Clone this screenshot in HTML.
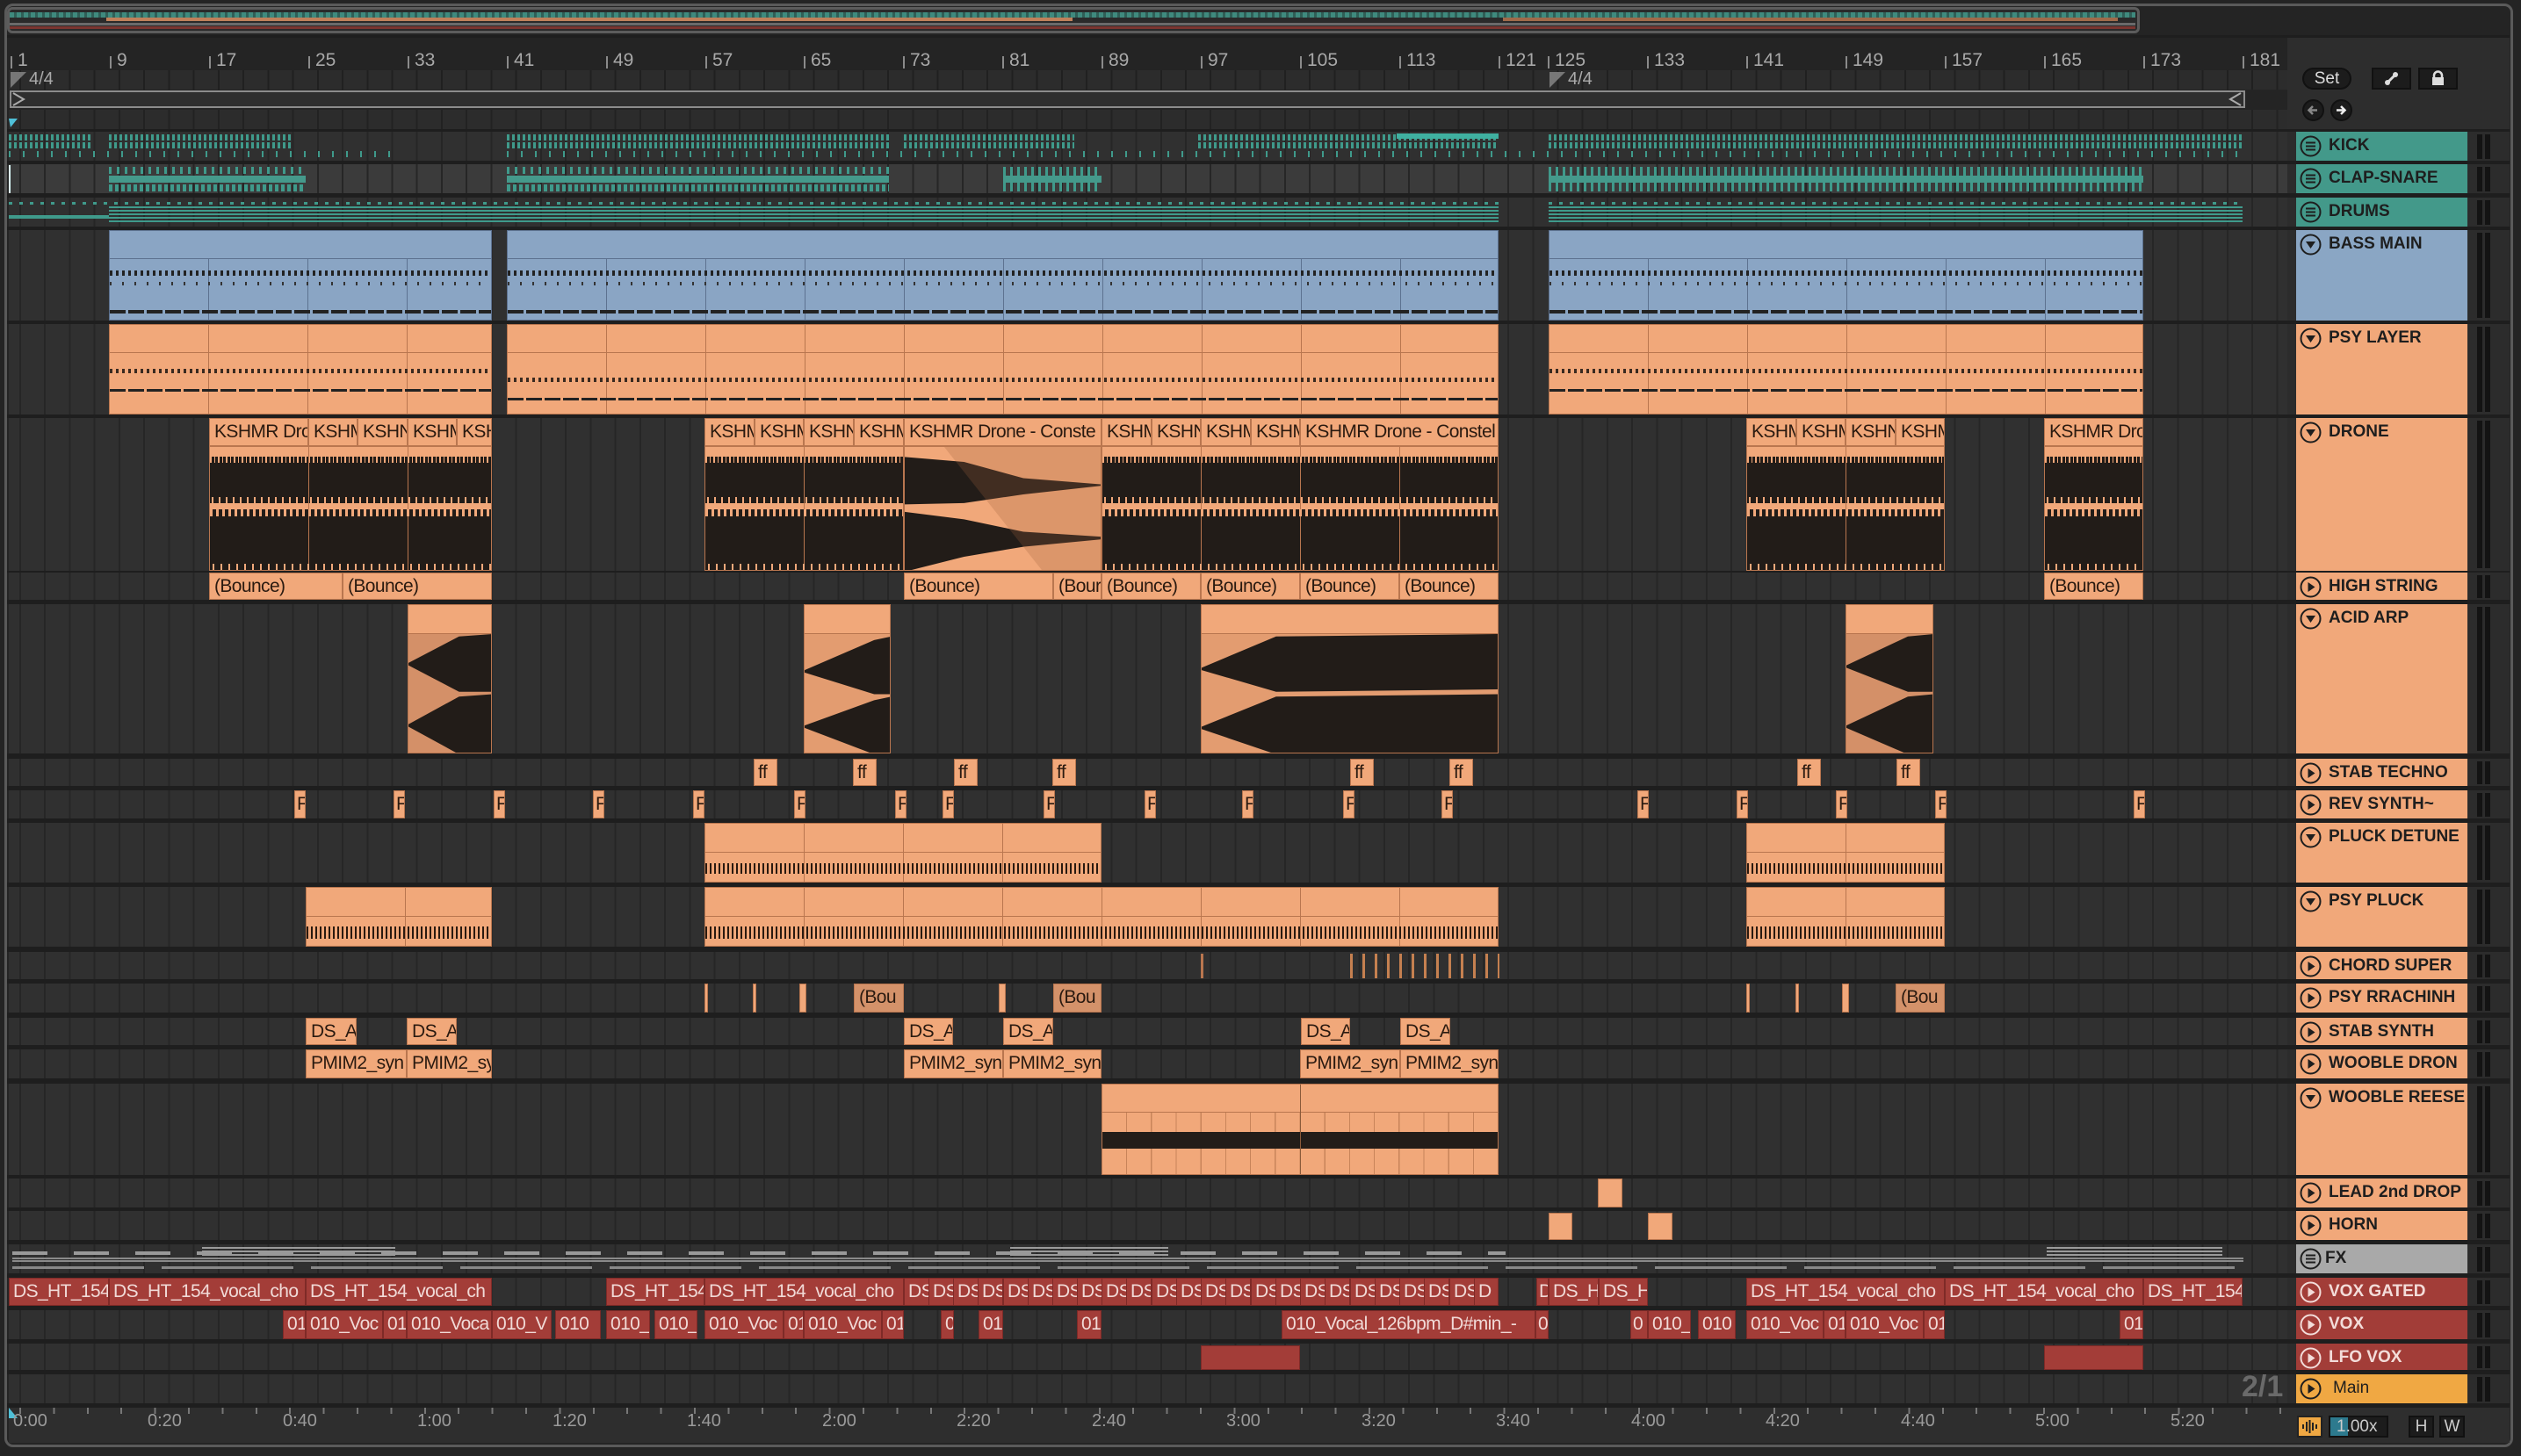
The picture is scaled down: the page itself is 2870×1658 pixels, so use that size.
<!DOCTYPE html>
<html><head><meta charset="utf-8"><style>
*{margin:0;padding:0;box-sizing:border-box}
body{width:2870px;height:1658px;background:#242424;position:relative;overflow:hidden;font-family:"Liberation Sans",sans-serif}
.a{position:absolute}
.frame{position:absolute;left:5px;top:4px;width:2856px;height:1644px;border:3px solid #5a5a5a;border-radius:10px}
.row{position:absolute;left:10px;width:2594px;background:#303030 repeating-linear-gradient(90deg,#262626 0 2px,transparent 2px 28.234px);background-position:12px 0}
.sep{position:absolute;left:8px;width:2849px;background:#1e1e1e}
.c{position:absolute;background:#f1a87a;border:1px solid #b9764f;overflow:hidden;color:#2a1a10;font-family:"Liberation Sans Narrow","Liberation Sans",sans-serif;font-size:21px;letter-spacing:-0.6px;white-space:nowrap;line-height:30px;padding-left:5px}
.r{position:absolute;background:#a33d38;border:1px solid #7e2a27;overflow:hidden;color:#f1dad7;font-family:"Liberation Sans Narrow","Liberation Sans",sans-serif;font-size:21px;letter-spacing:-0.6px;white-space:nowrap;line-height:30px;padding-left:4px}
.b{position:absolute;background:#8aa5c4;border:1px solid #5d7290}
.hd{position:absolute;left:2614px;width:195px;font-weight:bold;font-size:19px;color:#1e1e1e;padding:4px 0 0 37px;line-height:24px;white-space:nowrap}
.hd svg{position:absolute;left:4px;top:4px}
.m{position:absolute;left:2820px;width:16px;background:linear-gradient(90deg,#131313 0 6px,transparent 6px 9px,#131313 9px 15px,transparent 15px)}
.lbl{position:absolute;top:57px;color:#a8a8a8;font-size:21px}
.tk{position:absolute;top:64px;width:2px;height:14px;background:#8a8a8a}
.tl{position:absolute;top:1607px;color:#9a9a9a;font-size:20px}
.teal{background:repeating-linear-gradient(90deg,#3f9a8b 0 3px,transparent 3px 6px)}
.wv{background:
 repeating-linear-gradient(90deg,#f1a87a 0 2px,transparent 2px 5px,#f1a87a 5px 6px,transparent 6px 9px) 0 11px/100% 7px no-repeat,
 repeating-linear-gradient(90deg,transparent 0 2px,#f1a87a 2px 4px,transparent 4px 8px) 0 57px/100% 7px no-repeat,
 repeating-linear-gradient(90deg,#f1a87a 0 3px,transparent 3px 7px) 0 71px/100% 8px no-repeat,
 repeating-linear-gradient(90deg,transparent 0 3px,#f1a87a 3px 5px,transparent 5px 9px) 0 133px/100% 9px no-repeat,
 repeating-linear-gradient(90deg,transparent 0 112px,#b9764f 112px 113px),
 linear-gradient(#f1a87a 0 11px,#221c18 11px 64px,#f1a87a 64px 71px,#221c18 71px 142px)}
.btn{position:absolute;background:#1c1c1c;border:2px solid #111;color:#ccc;text-align:center}
</style></head><body>
<div class="frame"></div>

<!-- overview -->
<div class="a" style="left:8px;top:8px;width:2428px;height:30px;border:3px solid #5c5c5c;border-radius:6px;background:#2a2a2a;overflow:hidden">
 <div class="a" style="left:0;top:3px;width:2420px;height:6px;background:repeating-linear-gradient(90deg,#3f8a7e 0 5px,#2f5f57 5px 8px)"></div>
 <div class="a" style="left:110px;top:9px;width:1100px;height:4px;background:#c0805a"></div>
 <div class="a" style="left:1700px;top:9px;width:700px;height:4px;background:#a06a4a"></div>
 <div class="a" style="left:0;top:15px;width:2420px;height:3px;background:#6a6a6a"></div>
 <div class="a" style="left:0;top:19px;width:2420px;height:3px;background:#7a3530"></div>
</div>
<div class="a" style="left:8px;top:40px;width:2849px;height:3px;background:#1e1e1e"></div>

<!-- ruler -->
<div class="a" style="left:10px;top:80px;width:2594px;height:22px;background:#2c2c2c repeating-linear-gradient(90deg,#202020 0 2px,transparent 2px 28.234px);background-position:12px 0"></div>
<div class="tk" style="left:12px"></div><div class="lbl" style="left:20px">1</div>
<div class="tk" style="left:125px"></div><div class="lbl" style="left:133px">9</div>
<div class="tk" style="left:238px"></div><div class="lbl" style="left:246px">17</div>
<div class="tk" style="left:351px"></div><div class="lbl" style="left:359px">25</div>
<div class="tk" style="left:464px"></div><div class="lbl" style="left:472px">33</div>
<div class="tk" style="left:577px"></div><div class="lbl" style="left:585px">41</div>
<div class="tk" style="left:690px"></div><div class="lbl" style="left:698px">49</div>
<div class="tk" style="left:803px"></div><div class="lbl" style="left:811px">57</div>
<div class="tk" style="left:915px"></div><div class="lbl" style="left:923px">65</div>
<div class="tk" style="left:1028px"></div><div class="lbl" style="left:1036px">73</div>
<div class="tk" style="left:1141px"></div><div class="lbl" style="left:1149px">81</div>
<div class="tk" style="left:1254px"></div><div class="lbl" style="left:1262px">89</div>
<div class="tk" style="left:1367px"></div><div class="lbl" style="left:1375px">97</div>
<div class="tk" style="left:1480px"></div><div class="lbl" style="left:1488px">105</div>
<div class="tk" style="left:1593px"></div><div class="lbl" style="left:1601px">113</div>
<div class="tk" style="left:1706px"></div><div class="lbl" style="left:1714px">121</div>
<div class="tk" style="left:1762px"></div><div class="lbl" style="left:1770px">125</div>
<div class="tk" style="left:1875px"></div><div class="lbl" style="left:1883px">133</div>
<div class="tk" style="left:1988px"></div><div class="lbl" style="left:1996px">141</div>
<div class="tk" style="left:2101px"></div><div class="lbl" style="left:2109px">149</div>
<div class="tk" style="left:2214px"></div><div class="lbl" style="left:2222px">157</div>
<div class="tk" style="left:2327px"></div><div class="lbl" style="left:2335px">165</div>
<div class="tk" style="left:2440px"></div><div class="lbl" style="left:2448px">173</div>
<div class="tk" style="left:2553px"></div><div class="lbl" style="left:2561px">181</div>
<svg class="a" style="left:10px;top:80px" width="22" height="22"><polygon points="2,2 20,2 2,20" fill="#777"/></svg>
<div class="a" style="left:33px;top:79px;color:#aaa;font-size:20px">4/4</div>
<svg class="a" style="left:1762px;top:80px" width="22" height="22"><polygon points="2,2 20,2 2,20" fill="#777"/></svg>
<div class="a" style="left:1785px;top:79px;color:#aaa;font-size:20px">4/4</div>
<!-- loop bar -->
<div class="a" style="left:11px;top:103px;width:2545px;height:20px;border:2px solid #8c8c8c;background:#2e2e2e"></div>
<svg class="a" style="left:12px;top:104px" width="20" height="18"><polyline points="3,2 15,9 3,16" fill="none" stroke="#aaa" stroke-width="2"/></svg>
<svg class="a" style="left:2534px;top:104px" width="20" height="18"><polyline points="17,2 5,9 17,16" fill="none" stroke="#aaa" stroke-width="2"/></svg>
<div class="a" style="left:10px;top:125px;width:2594px;height:22px;background:#2c2c2c repeating-linear-gradient(90deg,#222 0 2px,transparent 2px 28.234px);background-position:12px 0"></div>
<svg class="a" style="left:10px;top:135px" width="12" height="10"><polygon points="0,0 10,0 2,10" fill="#4fc0d8"/></svg>

<!-- right top controls -->
<div class="a" style="left:2604px;top:43px;width:253px;height:104px;background:#2d2d2d"></div>
<div class="btn" style="left:2621px;top:77px;width:56px;height:25px;border-radius:13px;font-size:19px;line-height:21px;color:#ddd">Set</div>
<div class="btn" style="left:2700px;top:77px;width:45px;height:25px"><svg width="41" height="21"><line x1="16" y1="15" x2="25" y2="6" stroke="#ddd" stroke-width="3"/><circle cx="16" cy="15" r="3" fill="#ddd"/><circle cx="25" cy="6" r="3" fill="#ddd"/></svg></div>
<div class="btn" style="left:2753px;top:77px;width:45px;height:25px"><svg width="41" height="21"><rect x="14" y="9" width="13" height="9" fill="#ddd"/><path d="M16 10 V7 a4.5 4.5 0 0 1 9 0 V10" fill="none" stroke="#ddd" stroke-width="2.5"/></svg></div>
<div class="btn" style="left:2621px;top:113px;width:25px;height:25px;border-radius:13px"><svg width="21" height="21"><path d="M15 10.5 H6 M10 6 L5.5 10.5 L10 15" stroke="#888" stroke-width="2.5" fill="none"/></svg></div>
<div class="btn" style="left:2653px;top:113px;width:25px;height:25px;border-radius:13px"><svg width="21" height="21"><path d="M5 10.5 H14 M10 6 L14.5 10.5 L10 15" stroke="#eee" stroke-width="2.5" fill="none"/></svg></div>

<!-- rows -->
<div class="row" style="top:150px;height:33px"></div>
<div class="row" style="top:187px;height:33px;background-color:#3b3b3b"></div>
<div class="row" style="top:225px;height:33px"></div>
<div class="row" style="top:262px;height:103px"></div>
<div class="row" style="top:369px;height:103px"></div>
<div class="row" style="top:476px;height:174px"></div>
<div class="row" style="top:652px;height:31px"></div>
<div class="row" style="top:688px;height:170px"></div>
<div class="row" style="top:864px;height:31px"></div>
<div class="row" style="top:900px;height:32px"></div>
<div class="row" style="top:937px;height:68px"></div>
<div class="row" style="top:1010px;height:68px"></div>
<div class="row" style="top:1084px;height:31px"></div>
<div class="row" style="top:1120px;height:33px"></div>
<div class="row" style="top:1159px;height:31px"></div>
<div class="row" style="top:1195px;height:33px"></div>
<div class="row" style="top:1234px;height:104px"></div>
<div class="row" style="top:1342px;height:33px"></div>
<div class="row" style="top:1379px;height:33px"></div>
<div class="row" style="top:1417px;height:33px"></div>
<div class="row" style="top:1455px;height:32px"></div>
<div class="row" style="top:1492px;height:33px"></div>
<div class="row" style="top:1530px;height:30px"></div>
<div class="row" style="top:1565px;height:33px"></div>
<div class="a" style="left:2604px;top:147px;width:253px;height:1455px;background:#2c2c2c"></div>

<!-- separators -->
<div class="sep" style="top:147px;height:3px"></div>
<div class="sep" style="top:183px;height:4px"></div><div class="sep" style="top:220px;height:5px"></div><div class="sep" style="top:258px;height:4px"></div>
<div class="sep" style="top:365px;height:4px"></div><div class="sep" style="top:472px;height:4px"></div><div class="sep" style="top:650px;height:2px"></div>
<div class="sep" style="top:683px;height:5px"></div><div class="sep" style="top:858px;height:6px"></div><div class="sep" style="top:895px;height:5px"></div>
<div class="sep" style="top:932px;height:5px"></div><div class="sep" style="top:1005px;height:5px"></div><div class="sep" style="top:1078px;height:6px"></div>
<div class="sep" style="top:1115px;height:5px"></div><div class="sep" style="top:1153px;height:6px"></div><div class="sep" style="top:1190px;height:5px"></div>
<div class="sep" style="top:1228px;height:6px"></div><div class="sep" style="top:1338px;height:4px"></div><div class="sep" style="top:1375px;height:4px"></div>
<div class="sep" style="top:1412px;height:5px"></div><div class="sep" style="top:1450px;height:5px"></div><div class="sep" style="top:1487px;height:5px"></div>
<div class="sep" style="top:1525px;height:5px"></div><div class="sep" style="top:1560px;height:5px"></div><div class="sep" style="top:1598px;height:5px"></div>

<!-- KICK -->
<div class="a teal" style="left:10px;top:153px;width:96px;height:7px"></div><div class="a teal" style="left:10px;top:162px;width:96px;height:7px"></div>
<div class="a teal" style="left:124px;top:153px;width:210px;height:7px"></div><div class="a teal" style="left:124px;top:162px;width:210px;height:7px"></div>
<div class="a" style="left:10px;top:172px;width:440px;height:7px;background:repeating-linear-gradient(90deg,#3f9a8b 0 2px,transparent 2px 16px)"></div>
<div class="a teal" style="left:577px;top:153px;width:435px;height:7px"></div><div class="a teal" style="left:577px;top:162px;width:435px;height:7px"></div>
<div class="a teal" style="left:1029px;top:153px;width:194px;height:7px"></div><div class="a teal" style="left:1029px;top:162px;width:194px;height:7px"></div>
<div class="a teal" style="left:1364px;top:153px;width:342px;height:7px"></div><div class="a teal" style="left:1364px;top:162px;width:342px;height:7px"></div>
<div class="a" style="left:1590px;top:152px;width:116px;height:6px;background:#3fb0a0"></div>
<div class="a teal" style="left:1763px;top:153px;width:790px;height:7px"></div><div class="a teal" style="left:1763px;top:162px;width:790px;height:7px"></div>
<div class="a" style="left:577px;top:172px;width:1976px;height:7px;background:repeating-linear-gradient(90deg,#3f9a8b 0 2px,transparent 2px 16px)"></div>
<!-- CLAP -->
<div class="a" style="left:124px;top:190px;width:224px;height:8px;background:repeating-linear-gradient(90deg,#3f9a8b 0 3px,transparent 3px 9px)"></div>
<div class="a" style="left:124px;top:200px;width:224px;height:8px;background:#45998b"></div>
<div class="a" style="left:124px;top:210px;width:224px;height:8px;background:repeating-linear-gradient(90deg,#3f9a8b 0 4px,transparent 4px 7px)"></div>
<div class="a" style="left:577px;top:190px;width:435px;height:8px;background:repeating-linear-gradient(90deg,#3f9a8b 0 3px,transparent 3px 9px)"></div>
<div class="a" style="left:577px;top:200px;width:435px;height:8px;background:#45998b"></div>
<div class="a" style="left:577px;top:210px;width:435px;height:8px;background:repeating-linear-gradient(90deg,#3f9a8b 0 4px,transparent 4px 7px)"></div>
<div class="a" style="left:1142px;top:190px;width:112px;height:28px;background:linear-gradient(transparent 0 10px,#45998b 10px 18px,transparent 18px),repeating-linear-gradient(90deg,#3f9a8b 0 3px,transparent 3px 8px)"></div>
<div class="a" style="left:1763px;top:190px;width:677px;height:28px;background:linear-gradient(transparent 0 10px,#45998b 10px 18px,transparent 18px),repeating-linear-gradient(90deg,#3f9a8b 0 3px,transparent 3px 8px)"></div>
<div class="a" style="left:10px;top:188px;width:2px;height:32px;background:#dff"></div>
<!-- DRUMS -->
<div class="a" style="left:10px;top:230px;width:1696px;height:3px;background:repeating-linear-gradient(90deg,#3f9a8b 0 4px,transparent 4px 12px)"></div>
<div class="a" style="left:124px;top:235px;width:1582px;height:20px;background:repeating-linear-gradient(#3f9a8b 0 2px,transparent 2px 4px)"></div>
<div class="a" style="left:10px;top:245px;width:114px;height:4px;background:#3f9a8b"></div>
<div class="a" style="left:1763px;top:230px;width:790px;height:3px;background:repeating-linear-gradient(90deg,#3f9a8b 0 4px,transparent 4px 12px)"></div>
<div class="a" style="left:1763px;top:235px;width:790px;height:20px;background:repeating-linear-gradient(#3f9a8b 0 2px,transparent 2px 4px)"></div>

<!-- BASS MAIN -->
<div class="b" style="left:124px;top:262px;width:436px;height:103px;background:linear-gradient(#8aa5c4 0 31px,#5d7290 31px 32px,transparent 32px),repeating-linear-gradient(90deg,transparent 0 112px,#5d7290 112px 113px) #8aa5c4"><div class="a" style="left:0;top:45px;width:100%;height:6px;background:repeating-linear-gradient(90deg,#222 0 3px,transparent 3px 7px)"></div><div class="a" style="left:0;top:90px;width:100%;height:4px;background:repeating-linear-gradient(90deg,#222 0 18px,transparent 18px 21px)"></div><div class="a" style="left:0;top:58px;width:100%;height:4px;background:repeating-linear-gradient(90deg,#333 0 2px,transparent 2px 14px)"></div></div>
<div class="b" style="left:577px;top:262px;width:1129px;height:103px;background:linear-gradient(#8aa5c4 0 31px,#5d7290 31px 32px,transparent 32px),repeating-linear-gradient(90deg,transparent 0 112px,#5d7290 112px 113px) #8aa5c4"><div class="a" style="left:0;top:45px;width:100%;height:6px;background:repeating-linear-gradient(90deg,#222 0 3px,transparent 3px 7px)"></div><div class="a" style="left:0;top:90px;width:100%;height:4px;background:repeating-linear-gradient(90deg,#222 0 18px,transparent 18px 21px)"></div><div class="a" style="left:0;top:58px;width:100%;height:4px;background:repeating-linear-gradient(90deg,#333 0 2px,transparent 2px 14px)"></div></div>
<div class="b" style="left:1763px;top:262px;width:677px;height:103px;background:linear-gradient(#8aa5c4 0 31px,#5d7290 31px 32px,transparent 32px),repeating-linear-gradient(90deg,transparent 0 112px,#5d7290 112px 113px) #8aa5c4"><div class="a" style="left:0;top:45px;width:100%;height:6px;background:repeating-linear-gradient(90deg,#222 0 3px,transparent 3px 7px)"></div><div class="a" style="left:0;top:90px;width:100%;height:4px;background:repeating-linear-gradient(90deg,#222 0 18px,transparent 18px 21px)"></div><div class="a" style="left:0;top:58px;width:100%;height:4px;background:repeating-linear-gradient(90deg,#333 0 2px,transparent 2px 14px)"></div></div>

<!-- PSY LAYER -->
<div class="c" style="left:124px;top:369px;width:436px;height:103px;background:linear-gradient(transparent 0 31px,#b9764f 31px 32px,transparent 32px),repeating-linear-gradient(90deg,transparent 0 112px,#b9764f 112px 113px) #f1a87a"><div class="a" style="left:0;top:50px;width:100%;height:5px;background:repeating-linear-gradient(90deg,#3a2a20 0 3px,transparent 3px 7px)"></div><div class="a" style="left:0;top:73px;width:100%;height:3px;background:repeating-linear-gradient(90deg,#222 0 18px,transparent 18px 21px)"></div></div>
<div class="c" style="left:577px;top:369px;width:1129px;height:103px;background:linear-gradient(transparent 0 31px,#b9764f 31px 32px,transparent 32px),repeating-linear-gradient(90deg,transparent 0 112px,#b9764f 112px 113px) #f1a87a"><div class="a" style="left:0;top:60px;width:100%;height:5px;background:repeating-linear-gradient(90deg,#3a2a20 0 3px,transparent 3px 7px)"></div><div class="a" style="left:0;top:83px;width:100%;height:3px;background:repeating-linear-gradient(90deg,#222 0 18px,transparent 18px 21px)"></div></div>
<div class="c" style="left:1763px;top:369px;width:677px;height:103px;background:linear-gradient(transparent 0 31px,#b9764f 31px 32px,transparent 32px),repeating-linear-gradient(90deg,transparent 0 112px,#b9764f 112px 113px) #f1a87a"><div class="a" style="left:0;top:50px;width:100%;height:5px;background:repeating-linear-gradient(90deg,#3a2a20 0 3px,transparent 3px 7px)"></div><div class="a" style="left:0;top:73px;width:100%;height:3px;background:repeating-linear-gradient(90deg,#222 0 18px,transparent 18px 21px)"></div></div>

<!-- DRONE -->
<div class="c" style="left:238px;top:476px;width:113px;height:32px">KSHMR Dro</div>
<div class="c" style="left:351px;top:476px;width:56px;height:32px">KSHM</div>
<div class="c" style="left:407px;top:476px;width:57px;height:32px">KSHN</div>
<div class="c" style="left:464px;top:476px;width:56px;height:32px">KSHM</div>
<div class="c" style="left:520px;top:476px;width:40px;height:32px">KSH</div>
<div class="c wv" style="left:238px;top:508px;width:322px;height:142px"></div>
<div class="c" style="left:802px;top:476px;width:57px;height:32px">KSHM</div>
<div class="c" style="left:859px;top:476px;width:56px;height:32px">KSHM</div>
<div class="c" style="left:915px;top:476px;width:57px;height:32px">KSHN</div>
<div class="c" style="left:972px;top:476px;width:57px;height:32px">KSHM</div>
<div class="c" style="left:1029px;top:476px;width:225px;height:32px">KSHMR Drone - Conste</div>
<div class="c" style="left:1254px;top:476px;width:57px;height:32px">KSHM</div>
<div class="c" style="left:1311px;top:476px;width:56px;height:32px">KSHN</div>
<div class="c" style="left:1367px;top:476px;width:57px;height:32px">KSHM</div>
<div class="c" style="left:1424px;top:476px;width:56px;height:32px">KSHM</div>
<div class="c" style="left:1480px;top:476px;width:226px;height:32px">KSHMR Drone - Constel</div>
<div class="c wv" style="left:802px;top:508px;width:227px;height:142px"></div>
<div class="c" style="left:1029px;top:508px;width:225px;height:142px;padding:0"><svg width="225" height="142" viewBox="0 0 100 100" preserveAspectRatio="none"><polygon points="0,8 30,12 60,25 100,30 100,31 60,38 30,45 0,46" fill="#221c18"/><polygon points="0,52 30,58 60,68 100,72 100,74 60,80 30,88 0,100" fill="#221c18"/><polygon points="20,0 100,0 100,100 70,100" fill="#a0603a" opacity=".25"/></svg></div>
<div class="c wv" style="left:1254px;top:508px;width:452px;height:142px"></div>
<div class="c" style="left:1988px;top:476px;width:57px;height:32px">KSHM</div>
<div class="c" style="left:2045px;top:476px;width:56px;height:32px">KSHM</div>
<div class="c" style="left:2101px;top:476px;width:57px;height:32px">KSHN</div>
<div class="c" style="left:2158px;top:476px;width:56px;height:32px">KSHM</div>
<div class="c wv" style="left:1988px;top:508px;width:226px;height:142px"></div>
<div class="c" style="left:2327px;top:476px;width:113px;height:32px">KSHMR Dro</div>
<div class="c wv" style="left:2327px;top:508px;width:113px;height:142px"></div>

<!-- HIGH STRING -->
<div class="c" style="left:238px;top:652px;width:152px;height:31px">(Bounce)</div>
<div class="c" style="left:390px;top:652px;width:170px;height:31px">(Bounce)</div>
<div class="c" style="left:1029px;top:652px;width:170px;height:31px">(Bounce)</div>
<div class="c" style="left:1199px;top:652px;width:55px;height:31px">(Bour</div>
<div class="c" style="left:1254px;top:652px;width:113px;height:31px">(Bounce)</div>
<div class="c" style="left:1367px;top:652px;width:113px;height:31px">(Bounce)</div>
<div class="c" style="left:1480px;top:652px;width:113px;height:31px">(Bounce)</div>
<div class="c" style="left:1593px;top:652px;width:113px;height:31px">(Bounce)</div>
<div class="c" style="left:2327px;top:652px;width:113px;height:31px">(Bounce)</div>

<!-- ACID ARP -->
<div class="c" style="left:464px;top:688px;width:96px;height:170px;padding:0;background:linear-gradient(#f1a87a 0 32px,#b9764f 32px 33px,#d49068 33px)"><svg class="a" style="top:33px" width="96" height="137" viewBox="0 0 100 100" preserveAspectRatio="none"><polygon points="0,24 60,2 100,0 100,48 60,48 0,26" fill="#221c18"/><polygon points="0,75 60,52 100,50 100,100 60,100 0,77" fill="#221c18"/></svg></div>
<div class="c" style="left:915px;top:688px;width:99px;height:170px;padding:0;background:linear-gradient(#f1a87a 0 32px,#b9764f 32px 33px,#e39c70 33px)"><svg class="a" style="top:33px" width="99" height="137" viewBox="0 0 100 100" preserveAspectRatio="none"><polygon points="0,30 80,5 100,2 100,50 80,50 0,32" fill="#221c18"/><polygon points="0,76 80,55 100,52 100,100 80,100 0,78" fill="#221c18"/></svg></div>
<div class="c" style="left:1367px;top:688px;width:339px;height:170px;padding:0;background:linear-gradient(#f1a87a 0 32px,#b9764f 32px 33px,#e39c70 33px)"><svg class="a" style="top:33px" width="339" height="137" viewBox="0 0 100 100" preserveAspectRatio="none"><polygon points="0,28 25,2 100,0 100,46 25,48 0,30" fill="#221c18"/><polygon points="0,77 25,52 100,50 100,100 25,100 0,79" fill="#221c18"/></svg></div>
<div class="c" style="left:2101px;top:688px;width:100px;height:170px;padding:0;background:linear-gradient(#f1a87a 0 32px,#b9764f 32px 33px,#d49068 33px)"><svg class="a" style="top:33px" width="100" height="137" viewBox="0 0 100 100" preserveAspectRatio="none"><polygon points="0,26 70,2 100,0 100,48 70,48 0,28" fill="#221c18"/><polygon points="0,76 70,52 100,50 100,100 70,100 0,78" fill="#221c18"/></svg></div>

<!-- STAB TECHNO -->
<div class="c" style="left:858px;top:864px;width:27px;height:31px;padding-left:4px">ff</div>
<div class="c" style="left:971px;top:864px;width:27px;height:31px;padding-left:4px">ff</div>
<div class="c" style="left:1086px;top:864px;width:27px;height:31px;padding-left:4px">ff</div>
<div class="c" style="left:1198px;top:864px;width:27px;height:31px;padding-left:4px">ff</div>
<div class="c" style="left:1537px;top:864px;width:27px;height:31px;padding-left:4px">ff</div>
<div class="c" style="left:1650px;top:864px;width:27px;height:31px;padding-left:4px">ff</div>
<div class="c" style="left:2046px;top:864px;width:27px;height:31px;padding-left:4px">ff</div>
<div class="c" style="left:2159px;top:864px;width:27px;height:31px;padding-left:4px">ff</div>
<!-- REV SYNTH -->
<div class="c" style="left:335px;top:900px;width:13px;height:32px;padding-left:2px">F</div>
<div class="c" style="left:448px;top:900px;width:13px;height:32px;padding-left:2px">F</div>
<div class="c" style="left:562px;top:900px;width:13px;height:32px;padding-left:2px">F</div>
<div class="c" style="left:675px;top:900px;width:13px;height:32px;padding-left:2px">F</div>
<div class="c" style="left:789px;top:900px;width:13px;height:32px;padding-left:2px">F</div>
<div class="c" style="left:904px;top:900px;width:13px;height:32px;padding-left:2px">F</div>
<div class="c" style="left:1019px;top:900px;width:13px;height:32px;padding-left:2px">F</div>
<div class="c" style="left:1073px;top:900px;width:13px;height:32px;padding-left:2px">F</div>
<div class="c" style="left:1188px;top:900px;width:13px;height:32px;padding-left:2px">F</div>
<div class="c" style="left:1303px;top:900px;width:13px;height:32px;padding-left:2px">F</div>
<div class="c" style="left:1414px;top:900px;width:13px;height:32px;padding-left:2px">F</div>
<div class="c" style="left:1529px;top:900px;width:13px;height:32px;padding-left:2px">F</div>
<div class="c" style="left:1641px;top:900px;width:13px;height:32px;padding-left:2px">F</div>
<div class="c" style="left:1864px;top:900px;width:13px;height:32px;padding-left:2px">F</div>
<div class="c" style="left:1977px;top:900px;width:13px;height:32px;padding-left:2px">F</div>
<div class="c" style="left:2090px;top:900px;width:13px;height:32px;padding-left:2px">F</div>
<div class="c" style="left:2203px;top:900px;width:13px;height:32px;padding-left:2px">F</div>
<div class="c" style="left:2429px;top:900px;width:13px;height:32px;padding-left:2px">F</div>

<!-- PLUCK DETUNE -->
<div class="c" style="left:802px;top:937px;width:452px;height:68px;background:linear-gradient(transparent 0 32px,#b9764f 32px 33px,transparent 33px),repeating-linear-gradient(90deg,transparent 0 112px,#b9764f 112px 113px) #f1a87a"><div class="a" style="left:0;top:45px;width:100%;height:12px;background:repeating-linear-gradient(90deg,#2a1a10 0 2px,transparent 2px 5px)"></div></div>
<div class="c" style="left:1988px;top:937px;width:226px;height:68px;background:linear-gradient(transparent 0 32px,#b9764f 32px 33px,transparent 33px),repeating-linear-gradient(90deg,transparent 0 112px,#b9764f 112px 113px) #f1a87a"><div class="a" style="left:0;top:45px;width:100%;height:12px;background:repeating-linear-gradient(90deg,#2a1a10 0 2px,transparent 2px 5px)"></div></div>
<!-- PSY PLUCK -->
<div class="c" style="left:348px;top:1010px;width:212px;height:68px;background:linear-gradient(transparent 0 32px,#b9764f 32px 33px,transparent 33px),repeating-linear-gradient(90deg,transparent 0 112px,#b9764f 112px 113px) #f1a87a"><div class="a" style="left:0;top:44px;width:100%;height:14px;background:repeating-linear-gradient(90deg,#2a1a10 0 2px,transparent 2px 5px)"></div></div>
<div class="c" style="left:802px;top:1010px;width:904px;height:68px;background:linear-gradient(transparent 0 32px,#b9764f 32px 33px,transparent 33px),repeating-linear-gradient(90deg,transparent 0 112px,#b9764f 112px 113px) #f1a87a"><div class="a" style="left:0;top:44px;width:100%;height:14px;background:repeating-linear-gradient(90deg,#2a1a10 0 2px,transparent 2px 5px)"></div></div>
<div class="c" style="left:1988px;top:1010px;width:226px;height:68px;background:linear-gradient(transparent 0 32px,#b9764f 32px 33px,transparent 33px),repeating-linear-gradient(90deg,transparent 0 112px,#b9764f 112px 113px) #f1a87a"><div class="a" style="left:0;top:44px;width:100%;height:14px;background:repeating-linear-gradient(90deg,#2a1a10 0 2px,transparent 2px 5px)"></div></div>
<!-- CHORD SUPER -->
<div class="a" style="left:1367px;top:1086px;width:3px;height:28px;background:#b9764f"></div>
<div class="a" style="left:1537px;top:1086px;width:170px;height:28px;background:repeating-linear-gradient(90deg,#c58050 0 3px,transparent 3px 14px)"></div>
<!-- PSY RRACHINH -->
<div class="c" style="left:802px;top:1120px;width:4px;height:33px;padding:0"></div>
<div class="c" style="left:857px;top:1120px;width:4px;height:33px;padding:0"></div>
<div class="c" style="left:910px;top:1120px;width:8px;height:33px;padding:0"></div>
<div class="c" style="left:972px;top:1120px;width:57px;height:33px;background:#d4926a">(Bou</div>
<div class="c" style="left:1137px;top:1120px;width:8px;height:33px;padding:0"></div>
<div class="c" style="left:1199px;top:1120px;width:55px;height:33px;background:#d4926a">(Bou</div>
<div class="c" style="left:1988px;top:1120px;width:4px;height:33px;padding:0"></div>
<div class="c" style="left:2044px;top:1120px;width:4px;height:33px;padding:0"></div>
<div class="c" style="left:2097px;top:1120px;width:8px;height:33px;padding:0"></div>
<div class="c" style="left:2158px;top:1120px;width:56px;height:33px;background:#d4926a">(Bou</div>
<!-- STAB SYNTH -->
<div class="c" style="left:348px;top:1159px;width:58px;height:31px">DS_A</div>
<div class="c" style="left:463px;top:1159px;width:57px;height:31px">DS_A</div>
<div class="c" style="left:1029px;top:1159px;width:56px;height:31px">DS_A</div>
<div class="c" style="left:1142px;top:1159px;width:57px;height:31px">DS_A</div>
<div class="c" style="left:1481px;top:1159px;width:56px;height:31px">DS_A</div>
<div class="c" style="left:1594px;top:1159px;width:57px;height:31px">DS_A</div>
<!-- WOOBLE DRON -->
<div class="c" style="left:348px;top:1195px;width:115px;height:33px">PMIM2_syn</div>
<div class="c" style="left:463px;top:1195px;width:97px;height:33px">PMIM2_syn</div>
<div class="c" style="left:1029px;top:1195px;width:113px;height:33px">PMIM2_syn</div>
<div class="c" style="left:1142px;top:1195px;width:112px;height:33px">PMIM2_syn</div>
<div class="c" style="left:1480px;top:1195px;width:114px;height:33px">PMIM2_syn</div>
<div class="c" style="left:1594px;top:1195px;width:112px;height:33px">PMIM2_syn</div>
<!-- WOOBLE REESE -->
<div class="c" style="left:1254px;top:1234px;width:452px;height:104px;background:linear-gradient(#f1a87a 0 31px,#b9764f 31px 32px,transparent 32px 54px,#231d19 54px 73px,transparent 73px),repeating-linear-gradient(90deg,transparent 0 27px,#c8845a 27px 28.2px) #f1a87a"><div class="a" style="left:225px;top:0;width:1px;height:104px;background:#8a5a3a"></div></div>
<!-- LEAD / HORN -->
<div class="c" style="left:1819px;top:1342px;width:28px;height:33px"></div>
<div class="c" style="left:1763px;top:1381px;width:27px;height:31px"></div>
<div class="c" style="left:1876px;top:1381px;width:28px;height:31px"></div>
<!-- FX -->
<div class="a" style="left:14px;top:1425px;width:1700px;height:4px;background:repeating-linear-gradient(90deg,#999 0 40px,transparent 40px 70px)"></div>
<div class="a" style="left:14px;top:1432px;width:2540px;height:6px;background:repeating-linear-gradient(#8a8a8a 0 2px,transparent 2px 3px)"></div>
<div class="a" style="left:14px;top:1442px;width:2540px;height:3px;background:repeating-linear-gradient(90deg,#888 0 150px,transparent 150px 170px)"></div>
<div class="a" style="left:230px;top:1420px;width:220px;height:12px;background:repeating-linear-gradient(#9a9a9a 0 2px,transparent 2px 4px)"></div>
<div class="a" style="left:1150px;top:1420px;width:180px;height:12px;background:repeating-linear-gradient(#9a9a9a 0 2px,transparent 2px 4px)"></div>
<div class="a" style="left:2330px;top:1420px;width:200px;height:12px;background:repeating-linear-gradient(#9a9a9a 0 2px,transparent 2px 4px)"></div>

<!-- VOX GATED -->
<div class="r" style="left:10px;top:1455px;width:114px;height:32px">DS_HT_154</div>
<div class="r" style="left:124px;top:1455px;width:224px;height:32px">DS_HT_154_vocal_cho</div>
<div class="r" style="left:348px;top:1455px;width:212px;height:32px">DS_HT_154_vocal_ch</div>
<div class="r" style="left:690px;top:1455px;width:112px;height:32px">DS_HT_154</div>
<div class="r" style="left:802px;top:1455px;width:227px;height:32px">DS_HT_154_vocal_cho</div>
<div class="r" style="left:1029px;top:1455px;width:29px;height:32px">DS</div><div class="r" style="left:1057px;top:1455px;width:29px;height:32px">DS</div>
<div class="r" style="left:1085px;top:1455px;width:29px;height:32px">DS</div><div class="r" style="left:1113px;top:1455px;width:29px;height:32px">DS</div>
<div class="r" style="left:1142px;top:1455px;width:29px;height:32px">DS</div><div class="r" style="left:1170px;top:1455px;width:29px;height:32px">DS</div>
<div class="r" style="left:1198px;top:1455px;width:29px;height:32px">DS</div><div class="r" style="left:1226px;top:1455px;width:29px;height:32px">DS</div>
<div class="r" style="left:1254px;top:1455px;width:29px;height:32px">DS</div><div class="r" style="left:1282px;top:1455px;width:29px;height:32px">DS</div>
<div class="r" style="left:1311px;top:1455px;width:29px;height:32px">DS</div><div class="r" style="left:1339px;top:1455px;width:29px;height:32px">DS</div>
<div class="r" style="left:1367px;top:1455px;width:29px;height:32px">DS</div><div class="r" style="left:1395px;top:1455px;width:29px;height:32px">DS</div>
<div class="r" style="left:1424px;top:1455px;width:29px;height:32px">DS</div><div class="r" style="left:1452px;top:1455px;width:29px;height:32px">DS</div>
<div class="r" style="left:1480px;top:1455px;width:29px;height:32px">DS</div><div class="r" style="left:1508px;top:1455px;width:29px;height:32px">DS</div>
<div class="r" style="left:1537px;top:1455px;width:29px;height:32px">DS</div><div class="r" style="left:1565px;top:1455px;width:29px;height:32px">DS</div>
<div class="r" style="left:1593px;top:1455px;width:29px;height:32px">DS</div><div class="r" style="left:1621px;top:1455px;width:29px;height:32px">DS</div>
<div class="r" style="left:1650px;top:1455px;width:29px;height:32px">DS</div><div class="r" style="left:1678px;top:1455px;width:28px;height:32px">D</div>
<div class="r" style="left:1749px;top:1455px;width:14px;height:32px;padding-left:2px">D</div>
<div class="r" style="left:1763px;top:1455px;width:57px;height:32px">DS_H</div>
<div class="r" style="left:1820px;top:1455px;width:56px;height:32px">DS_H</div>
<div class="r" style="left:1988px;top:1455px;width:226px;height:32px">DS_HT_154_vocal_cho</div>
<div class="r" style="left:2214px;top:1455px;width:226px;height:32px">DS_HT_154_vocal_cho</div>
<div class="r" style="left:2440px;top:1455px;width:113px;height:32px">DS_HT_154</div>
<!-- VOX -->
<div class="r" style="left:322px;top:1492px;width:26px;height:33px">01</div>
<div class="r" style="left:348px;top:1492px;width:88px;height:33px">010_Voc</div>
<div class="r" style="left:436px;top:1492px;width:27px;height:33px">01</div>
<div class="r" style="left:463px;top:1492px;width:97px;height:33px">010_Voca</div>
<div class="r" style="left:560px;top:1492px;width:68px;height:33px">010_V</div>
<div class="r" style="left:632px;top:1492px;width:52px;height:33px">010</div>
<div class="r" style="left:690px;top:1492px;width:50px;height:33px">010_</div>
<div class="r" style="left:745px;top:1492px;width:49px;height:33px">010_</div>
<div class="r" style="left:802px;top:1492px;width:90px;height:33px">010_Voc</div>
<div class="r" style="left:892px;top:1492px;width:23px;height:33px">01</div>
<div class="r" style="left:915px;top:1492px;width:89px;height:33px">010_Voc</div>
<div class="r" style="left:1004px;top:1492px;width:25px;height:33px">01</div>
<div class="r" style="left:1071px;top:1492px;width:15px;height:33px">0</div>
<div class="r" style="left:1114px;top:1492px;width:28px;height:33px">01</div>
<div class="r" style="left:1226px;top:1492px;width:28px;height:33px">01</div>
<div class="r" style="left:1459px;top:1492px;width:289px;height:33px">010_Vocal_126bpm_D#min_-</div>
<div class="r" style="left:1748px;top:1492px;width:15px;height:33px;padding-left:2px">0</div>
<div class="r" style="left:1856px;top:1492px;width:20px;height:33px;padding-left:2px">0</div>
<div class="r" style="left:1876px;top:1492px;width:49px;height:33px">010_</div>
<div class="r" style="left:1933px;top:1492px;width:43px;height:33px">010</div>
<div class="r" style="left:1988px;top:1492px;width:88px;height:33px">010_Voc</div>
<div class="r" style="left:2076px;top:1492px;width:25px;height:33px">01</div>
<div class="r" style="left:2101px;top:1492px;width:89px;height:33px">010_Voc</div>
<div class="r" style="left:2190px;top:1492px;width:24px;height:33px">01</div>
<div class="r" style="left:2413px;top:1492px;width:27px;height:33px">01</div>
<!-- LFO VOX -->
<div class="r" style="left:1367px;top:1532px;width:113px;height:28px"></div>
<div class="r" style="left:2327px;top:1532px;width:113px;height:28px"></div>
<!-- 2/1 -->
<div class="a" style="left:2552px;top:1560px;color:#6a6a6a;font-size:34px;font-weight:bold">2/1</div>

<!-- bottom time ruler -->
<div class="a" style="left:10px;top:1603px;width:2594px;height:40px;background:#2e2e2e"></div>
<div class="a" style="left:10px;top:1603px;width:2594px;height:7px;background:repeating-linear-gradient(90deg,#777 0 2px,transparent 2px 38.4px);background-position:12px 0"></div>
<svg class="a" style="left:10px;top:1603px" width="12" height="14"><polygon points="0,0 10,12 0,12" fill="#4fc0d8"/></svg>
<div class="tl" style="left:15px">0:00</div><div class="tl" style="left:168px">0:20</div><div class="tl" style="left:322px">0:40</div><div class="tl" style="left:475px">1:00</div>
<div class="tl" style="left:629px">1:20</div><div class="tl" style="left:782px">1:40</div><div class="tl" style="left:936px">2:00</div><div class="tl" style="left:1089px">2:20</div>
<div class="tl" style="left:1243px">2:40</div><div class="tl" style="left:1396px">3:00</div><div class="tl" style="left:1550px">3:20</div><div class="tl" style="left:1703px">3:40</div>
<div class="tl" style="left:1857px">4:00</div><div class="tl" style="left:2010px">4:20</div><div class="tl" style="left:2164px">4:40</div><div class="tl" style="left:2317px">5:00</div><div class="tl" style="left:2471px">5:20</div>

<!-- headers -->
<div class="hd" style="top:150px;height:33px;background:#43998a"><svg width="25" height="25"><circle cx="12.5" cy="12.5" r="11" fill="none" stroke="#1e1e1e" stroke-width="2"/><path d="M7 8.5h11M7 12.5h11M7 16.5h11" stroke="#1e1e1e" stroke-width="2"/></svg>KICK</div>
<div class="hd" style="top:187px;height:33px;background:#43998a"><svg width="25" height="25"><circle cx="12.5" cy="12.5" r="11" fill="none" stroke="#1e1e1e" stroke-width="2"/><path d="M7 8.5h11M7 12.5h11M7 16.5h11" stroke="#1e1e1e" stroke-width="2"/></svg>CLAP-SNARE</div>
<div class="hd" style="top:225px;height:33px;background:#43998a"><svg width="25" height="25"><circle cx="12.5" cy="12.5" r="11" fill="none" stroke="#1e1e1e" stroke-width="2"/><path d="M7 8.5h11M7 12.5h11M7 16.5h11" stroke="#1e1e1e" stroke-width="2"/></svg>DRUMS</div>
<div class="hd" style="top:262px;height:103px;background:#8aa6c4"><svg width="25" height="25"><circle cx="12.5" cy="12.5" r="11" fill="none" stroke="#1e1e1e" stroke-width="2"/><polygon points="7,9 18,9 12.5,17" fill="#1e1e1e"/></svg>BASS MAIN</div>
<div class="hd" style="top:369px;height:103px;background:#f1a87a"><svg width="25" height="25"><circle cx="12.5" cy="12.5" r="11" fill="none" stroke="#1e1e1e" stroke-width="2"/><polygon points="7,9 18,9 12.5,17" fill="#1e1e1e"/></svg>PSY LAYER</div>
<div class="hd" style="top:476px;height:174px;background:#f1a87a"><svg width="25" height="25"><circle cx="12.5" cy="12.5" r="11" fill="none" stroke="#1e1e1e" stroke-width="2"/><polygon points="7,9 18,9 12.5,17" fill="#1e1e1e"/></svg>DRONE</div>
<div class="hd" style="top:652px;height:31px;background:#f1a87a"><svg width="25" height="25"><circle cx="12.5" cy="12.5" r="11" fill="none" stroke="#1e1e1e" stroke-width="2"/><polygon points="9.5,7 17.5,12.5 9.5,18" fill="#1e1e1e"/></svg>HIGH STRING</div>
<div class="hd" style="top:688px;height:170px;background:#f1a87a"><svg width="25" height="25"><circle cx="12.5" cy="12.5" r="11" fill="none" stroke="#1e1e1e" stroke-width="2"/><polygon points="7,9 18,9 12.5,17" fill="#1e1e1e"/></svg>ACID ARP</div>
<div class="hd" style="top:864px;height:31px;background:#f1a87a"><svg width="25" height="25"><circle cx="12.5" cy="12.5" r="11" fill="none" stroke="#1e1e1e" stroke-width="2"/><polygon points="9.5,7 17.5,12.5 9.5,18" fill="#1e1e1e"/></svg>STAB TECHNO</div>
<div class="hd" style="top:900px;height:32px;background:#f1a87a"><svg width="25" height="25"><circle cx="12.5" cy="12.5" r="11" fill="none" stroke="#1e1e1e" stroke-width="2"/><polygon points="9.5,7 17.5,12.5 9.5,18" fill="#1e1e1e"/></svg>REV SYNTH~</div>
<div class="hd" style="top:937px;height:68px;background:#f1a87a"><svg width="25" height="25"><circle cx="12.5" cy="12.5" r="11" fill="none" stroke="#1e1e1e" stroke-width="2"/><polygon points="7,9 18,9 12.5,17" fill="#1e1e1e"/></svg>PLUCK DETUNE</div>
<div class="hd" style="top:1010px;height:68px;background:#f1a87a"><svg width="25" height="25"><circle cx="12.5" cy="12.5" r="11" fill="none" stroke="#1e1e1e" stroke-width="2"/><polygon points="7,9 18,9 12.5,17" fill="#1e1e1e"/></svg>PSY PLUCK</div>
<div class="hd" style="top:1084px;height:31px;background:#f1a87a"><svg width="25" height="25"><circle cx="12.5" cy="12.5" r="11" fill="none" stroke="#1e1e1e" stroke-width="2"/><polygon points="9.5,7 17.5,12.5 9.5,18" fill="#1e1e1e"/></svg>CHORD SUPER</div>
<div class="hd" style="top:1120px;height:33px;background:#f1a87a"><svg width="25" height="25"><circle cx="12.5" cy="12.5" r="11" fill="none" stroke="#1e1e1e" stroke-width="2"/><polygon points="9.5,7 17.5,12.5 9.5,18" fill="#1e1e1e"/></svg>PSY RRACHINH</div>
<div class="hd" style="top:1159px;height:31px;background:#f1a87a"><svg width="25" height="25"><circle cx="12.5" cy="12.5" r="11" fill="none" stroke="#1e1e1e" stroke-width="2"/><polygon points="9.5,7 17.5,12.5 9.5,18" fill="#1e1e1e"/></svg>STAB SYNTH</div>
<div class="hd" style="top:1195px;height:33px;background:#f1a87a"><svg width="25" height="25"><circle cx="12.5" cy="12.5" r="11" fill="none" stroke="#1e1e1e" stroke-width="2"/><polygon points="9.5,7 17.5,12.5 9.5,18" fill="#1e1e1e"/></svg>WOOBLE DRON</div>
<div class="hd" style="top:1234px;height:104px;background:#f1a87a"><svg width="25" height="25"><circle cx="12.5" cy="12.5" r="11" fill="none" stroke="#1e1e1e" stroke-width="2"/><polygon points="7,9 18,9 12.5,17" fill="#1e1e1e"/></svg>WOOBLE REESE</div>
<div class="hd" style="top:1342px;height:33px;background:#f1a87a"><svg width="25" height="25"><circle cx="12.5" cy="12.5" r="11" fill="none" stroke="#1e1e1e" stroke-width="2"/><polygon points="9.5,7 17.5,12.5 9.5,18" fill="#1e1e1e"/></svg>LEAD 2nd DROP</div>
<div class="hd" style="top:1379px;height:33px;background:#f1a87a"><svg width="25" height="25"><circle cx="12.5" cy="12.5" r="11" fill="none" stroke="#1e1e1e" stroke-width="2"/><polygon points="9.5,7 17.5,12.5 9.5,18" fill="#1e1e1e"/></svg>HORN</div>
<div class="hd" style="top:1417px;height:33px;background:#a9a9a9;padding-left:33px"><svg width="25" height="25"><circle cx="12.5" cy="12.5" r="11" fill="none" stroke="#1e1e1e" stroke-width="2"/><path d="M7 8.5h11M7 12.5h11M7 16.5h11" stroke="#1e1e1e" stroke-width="2"/></svg>FX</div>
<div class="hd" style="top:1455px;height:32px;background:#a23d38;color:#f3dcd9"><svg width="25" height="25"><circle cx="12.5" cy="12.5" r="11" fill="none" stroke="#f3dcd9" stroke-width="2"/><polygon points="9.5,7 17.5,12.5 9.5,18" fill="#f3dcd9"/></svg>VOX GATED</div>
<div class="hd" style="top:1492px;height:33px;background:#a23d38;color:#f3dcd9"><svg width="25" height="25"><circle cx="12.5" cy="12.5" r="11" fill="none" stroke="#f3dcd9" stroke-width="2"/><polygon points="9.5,7 17.5,12.5 9.5,18" fill="#f3dcd9"/></svg>VOX</div>
<div class="hd" style="top:1530px;height:30px;background:#a23d38;color:#f3dcd9"><svg width="25" height="25"><circle cx="12.5" cy="12.5" r="11" fill="none" stroke="#f3dcd9" stroke-width="2"/><polygon points="9.5,7 17.5,12.5 9.5,18" fill="#f3dcd9"/></svg>LFO VOX</div>
<div class="hd" style="top:1565px;height:33px;background:#f0a843;font-weight:normal;padding-left:42px"><svg width="25" height="25"><circle cx="12.5" cy="12.5" r="11" fill="none" stroke="#1e1e1e" stroke-width="2"/><polygon points="9.5,7 17.5,12.5 9.5,18" fill="#1e1e1e"/></svg>Main</div>

<!-- meters -->
<div class="m" style="top:153px;height:28px"></div><div class="m" style="top:190px;height:28px"></div><div class="m" style="top:228px;height:28px"></div>
<div class="m" style="top:265px;height:97px"></div><div class="m" style="top:372px;height:97px"></div><div class="m" style="top:479px;height:168px"></div>
<div class="m" style="top:655px;height:26px"></div><div class="m" style="top:691px;height:164px"></div><div class="m" style="top:867px;height:26px"></div>
<div class="m" style="top:903px;height:27px"></div><div class="m" style="top:940px;height:62px"></div><div class="m" style="top:1013px;height:62px"></div>
<div class="m" style="top:1087px;height:26px"></div><div class="m" style="top:1123px;height:28px"></div><div class="m" style="top:1162px;height:26px"></div>
<div class="m" style="top:1198px;height:28px"></div><div class="m" style="top:1237px;height:98px"></div><div class="m" style="top:1345px;height:28px"></div>
<div class="m" style="top:1382px;height:28px"></div><div class="m" style="top:1420px;height:28px"></div><div class="m" style="top:1458px;height:27px"></div>
<div class="m" style="top:1495px;height:28px"></div><div class="m" style="top:1533px;height:25px"></div><div class="m" style="top:1568px;height:28px"></div>

<!-- bottom right controls -->
<div class="a" style="left:2604px;top:1603px;width:253px;height:40px;background:#2e2e2e"></div>
<div class="a" style="left:2615px;top:1612px;width:29px;height:25px;background:#f0a843;border:2px solid #222"><svg width="25" height="21"><path d="M5 8v5M9 5v11M12.5 3v15M16 6v9M20 8v5" stroke="#222" stroke-width="2"/></svg></div>
<div class="a" style="left:2651px;top:1612px;width:68px;height:25px;border:2px solid #111;color:#ccc;font-size:19px;line-height:21px;padding-left:7px;background:linear-gradient(90deg,#2d7a8e 0 20px,#1c1c1c 20px)">1.00x</div>
<div class="btn" style="left:2742px;top:1612px;width:29px;height:25px;font-size:19px;line-height:21px">H</div>
<div class="btn" style="left:2777px;top:1612px;width:29px;height:25px;font-size:19px;line-height:21px">W</div>
</body></html>
